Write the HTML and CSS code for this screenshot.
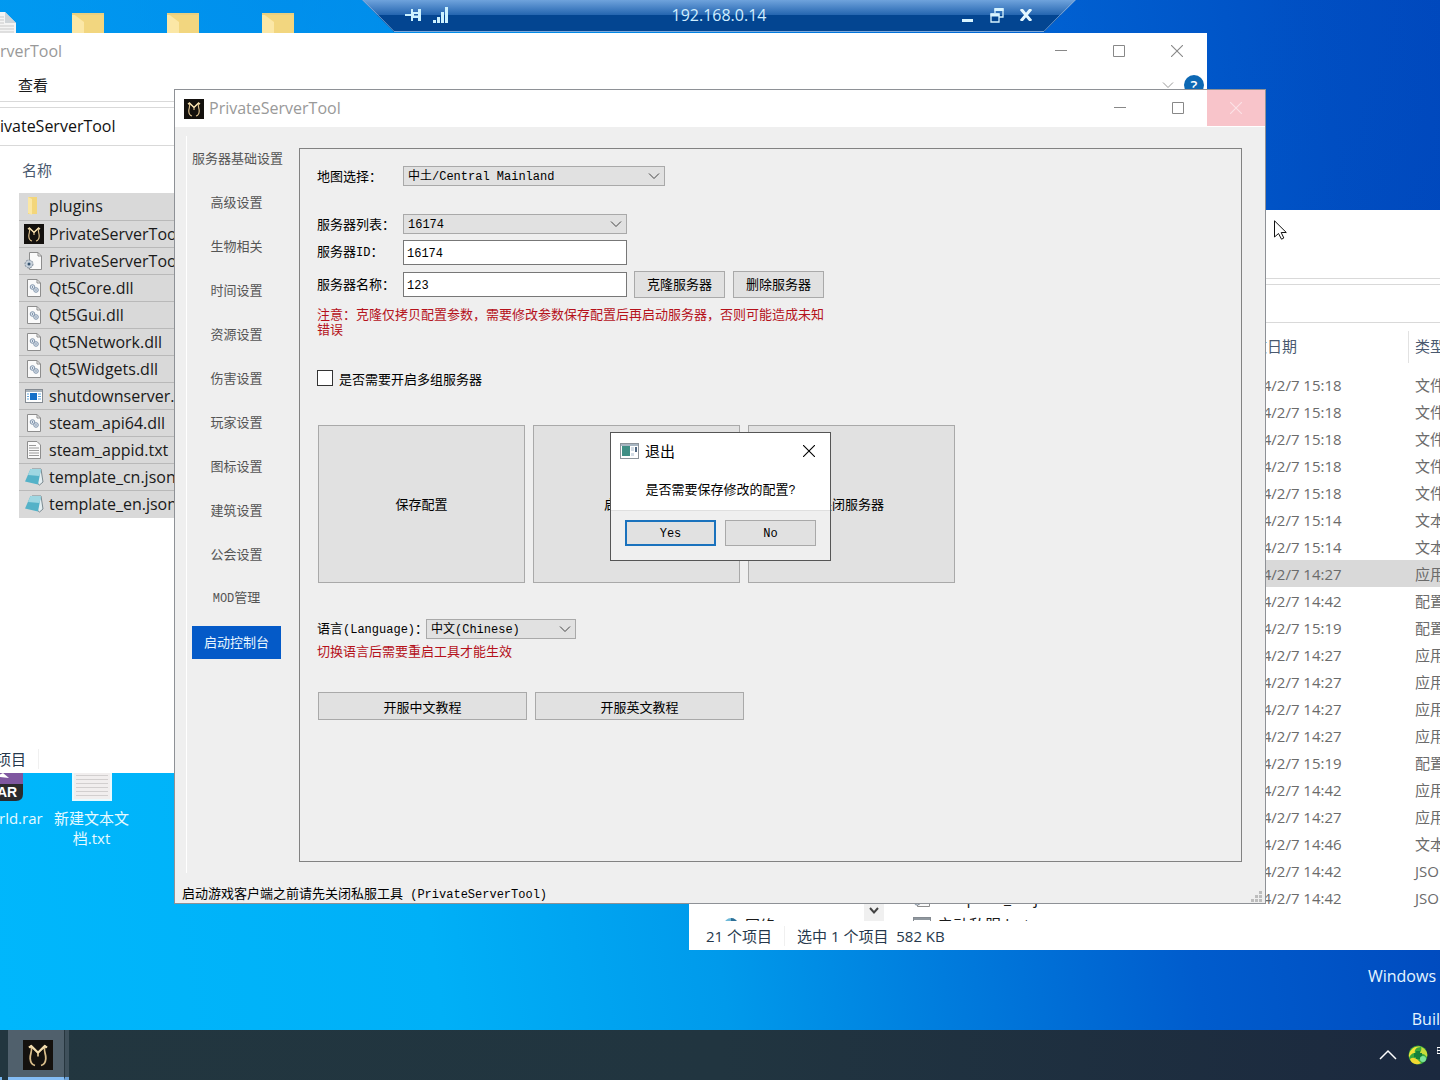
FILE: index.html
```html
<!DOCTYPE html>
<html lang="zh-CN">
<head>
<meta charset="utf-8">
<title>PrivateServerTool</title>
<link rel="stylesheet" href="styles.css">
</head>
<body>
<svg class="sprite" aria-hidden="true">
  <symbol id="app" viewBox="0 0 20 20"><rect width="20" height="20" fill="#14110e"/><path d="M4 5 5.500 4 10 8.500 14.500 4 16 5M5.500 4C6.500 8 4.500 9 4.800 12.500 5 15 6 16.500 8 17M14.500 4C13.500 8 15.500 9 15.200 12.500 15 15 14 16.500 12 17M10 8V11" fill="none" stroke="#d9bd8a" stroke-width="1.200"/><path d="M4 5 5.500 4 10 8.500 14.500 4 16 5" fill="none" stroke="#f1dcae" stroke-width="1.200"/></symbol>
  <symbol id="folder" viewBox="0 0 20 20"><path d="M4 1H13V18H4Z" fill="#f3d67b"/><path d="M4 1 8 3V19L4 17Z" fill="#fbe7a4"/></symbol>
  <symbol id="dll" viewBox="0 0 20 20"><path d="M3.500 1.500H13L16.500 5V18.500H3.500Z" fill="#fafafa" stroke="#8d8d8d"/><path d="M13 1.500V5H16.500" fill="none" stroke="#8d8d8d"/><circle cx="8.500" cy="9" r="2.300" fill="#dfe6ee" stroke="#8296ad"/><circle cx="12" cy="12" r="2.300" fill="#dfe6ee" stroke="#8296ad"/><path d="M8.500 8V10M11 12H13" stroke="#8296ad"/></symbol>
  <symbol id="ini" viewBox="0 0 20 20"><path d="M5.500 1.500H14L17.500 5V18.500H5.500Z" fill="#fafafa" stroke="#8d8d8d"/><path d="M14 1.500V5H17.500" fill="none" stroke="#8d8d8d"/><circle cx="5" cy="13" r="4" fill="#c7d1db" stroke="#7f8c99" stroke-dasharray="2 1"/><circle cx="5" cy="13" r="1.500" fill="#35526e"/></symbol>
  <symbol id="exe" viewBox="0 0 20 20"><rect x="1.500" y="3.500" width="17" height="13" fill="#fff" stroke="#858b92"/><path d="M2 5H18" stroke="#a9b4bd" stroke-width="2"/><rect x="6" y="7" width="7" height="7" fill="#1470c8"/><path d="M3 8H5M3 10.500H5M3 13H5M14 8H17M14 10.500H17M14 13H17" stroke="#62a7dd"/></symbol>
  <symbol id="bat" viewBox="0 0 20 20"><rect x="1.500" y="2.500" width="17" height="16" fill="#fff" stroke="#858b92"/><path d="M2 4H18" stroke="#8f979e" stroke-width="2"/><circle cx="9" cy="10" r="3" fill="none" stroke="#8296ad"/></symbol>
  <symbol id="txt" viewBox="0 0 20 20"><path d="M3.500 1.500H13L16.500 5V18.500H3.500Z" fill="#fafafa" stroke="#8d8d8d"/><path d="M5 5.500H12M5 8H15M5 10.500H15M5 13H15M5 15.500H15" stroke="#9a9a9a"/></symbol>
  <symbol id="note" viewBox="0 0 20 20"><path d="M8 2 17 2 19 15 15.500 18 13 16Z" fill="#e4eef1" stroke="#5f7178" stroke-width=".8"/><path d="M6.500 2H17L14 17.500 1 14.500Z" fill="#54b2c8"/><path d="M6.500 2H17L15.500 9 4 8Z" fill="#9fd7e2"/></symbol>
  <symbol id="chev" viewBox="0 0 12 12"><path d="M1 3.500 6 8.500 11 3.500" fill="none" stroke="currentColor"/></symbol>
  <symbol id="min" viewBox="0 0 12 12"><path d="M0 5.500H12" stroke="currentColor"/></symbol>
  <symbol id="max" viewBox="0 0 12 12"><path d="M.5.500H11.500V11.500H.5Z" fill="none" stroke="currentColor"/></symbol>
  <symbol id="close" viewBox="0 0 12 12"><path d="M0 0 12 12M12 0 0 12" stroke="currentColor" stroke-width="1.100"/></symbol>
  <symbol id="bigfolder" viewBox="0 0 32 32"><path d="M0 1H32V32H0Z" fill="#f2d67f"/><path d="M0 1 12 10V32H0Z" fill="#fbe7a6"/><path d="M0 1H32V3H0Z" fill="#e9cf80"/></symbol>
</svg>

<main class="desktop">
  <div class="shortcuts">
    <svg class="doc" viewBox="0 0 16 22"><path d="M0 0H5L16 11V22H0Z" fill="#f4f4f4"/><path d="M5 0V11H16Z" fill="#cfd4d8"/><path d="M0 5H4M0 8H4M0 11H4M0 14H14M0 17H14M0 20H14" stroke="#c9c9c9"/></svg>
    <svg class="fold"><use href="#bigfolder"/></svg>
    <svg class="fold"><use href="#bigfolder"/></svg>
    <svg class="fold"><use href="#bigfolder"/></svg>
  </div>

  <div class="files">
    <div class="file rar">
      <svg width="24" height="29" viewBox="0 0 24 29"><path d="M0 0H24V11H0Z" fill="#7f57a0"/><path d="M0 2 4 0 10 5 0 4Z" fill="#fff"/><path d="M0 11H24V21Q24 28 17 28H0Z" fill="#2b2b2e"/><text x="-2" y="24" class="rartext">AR</text></svg>
      <span>rld.rar</span>
    </div>
    <div class="file">
      <svg width="40" height="29" viewBox="0 0 40 29"><path d="M0 0H40V28H0Z" fill="#e9fafe"/><path d="M2 0H38V26H2Z" fill="#f1eeee"/><path d="M4 2.500H36M4 6.500H36M4 10.500H36M4 14.500H36M4 18.500H36M4 22.500H36" stroke="#d2cfcf"/></svg>
      <span>新建文本文<br>档.txt</span>
    </div>
  </div>

  <div class="watermark"><span>Windows</span><span>Buil</span></div>

  <section class="explorer right-explorer">
    <div class="strip-top"></div>
    <div class="strip-gap"></div>
    <div class="strip-address"></div>
    <div class="split">
      <nav class="tree">
        <a href="#" class="net"><svg width="16" height="16" viewBox="0 0 16 16"><circle cx="8" cy="8" r="7" fill="#6fb9d8"/><path d="M8 1A7 7 0 0 1 15 8H8Z" fill="#2e6f96"/></svg>网络</a>
        <button class="scroll" aria-label="向下滚动"><svg width="12" height="12" viewBox="0 0 12 12"><path d="M2 3 6 7.500 10 3" fill="none" stroke="#444" stroke-width="2"/></svg></button>
      </nav>
      <table class="details">
        <colgroup><col class="c-name"><col class="c-date"><col class="c-type"></colgroup>
        <thead><tr><th></th><th>修改日期</th><th>类型</th></tr></thead>
        <tbody>
          <tr><td></td><td>2024/2/7 15:18</td><td>文件夹</td></tr>
          <tr><td></td><td>2024/2/7 15:18</td><td>文件夹</td></tr>
          <tr><td></td><td>2024/2/7 15:18</td><td>文件夹</td></tr>
          <tr><td></td><td>2024/2/7 15:18</td><td>文件夹</td></tr>
          <tr><td></td><td>2024/2/7 15:18</td><td>文件夹</td></tr>
          <tr><td></td><td>2024/2/7 15:14</td><td>文本</td></tr>
          <tr><td></td><td>2024/2/7 15:14</td><td>文本</td></tr>
          <tr class="picked"><td></td><td>2024/2/7 14:27</td><td>应用</td></tr>
          <tr><td></td><td>2024/2/7 14:42</td><td>配置</td></tr>
          <tr><td></td><td>2024/2/7 15:19</td><td>配置</td></tr>
          <tr><td></td><td>2024/2/7 14:27</td><td>应用</td></tr>
          <tr><td></td><td>2024/2/7 14:27</td><td>应用</td></tr>
          <tr><td></td><td>2024/2/7 14:27</td><td>应用</td></tr>
          <tr><td></td><td>2024/2/7 14:27</td><td>应用</td></tr>
          <tr><td></td><td>2024/2/7 15:19</td><td>配置</td></tr>
          <tr><td></td><td>2024/2/7 14:42</td><td>应用</td></tr>
          <tr><td></td><td>2024/2/7 14:27</td><td>应用</td></tr>
          <tr><td></td><td>2024/2/7 14:46</td><td>文本</td></tr>
          <tr><td></td><td>2024/2/7 14:42</td><td>JSON</td></tr>
          <tr><td><span class="name"><svg><use href="#ini"/></svg>template_en.json</span></td><td>2024/2/7 14:42</td><td>JSON</td></tr>
          <tr><td><span class="name"><svg><use href="#bat"/></svg>启动私服.bat</span></td><td>2024/2/7 15:18</td><td>Win</td></tr>
        </tbody>
      </table>
    </div>
    <footer class="status"><span>21 个项目</span><i></i><span>选中 1 个项目&nbsp; 582 KB</span></footer>
  </section>

  <section class="explorer left-explorer">
    <header class="titlebar">
      <span class="title">rverTool</span>
      <button aria-label="最小化"><svg><use href="#min"/></svg></button>
      <button aria-label="最大化"><svg><use href="#max"/></svg></button>
      <button aria-label="关闭"><svg><use href="#close"/></svg></button>
    </header>
    <div class="ribbon"><a href="#">查看</a><svg class="expand"><use href="#chev"/></svg><span class="help">?</span></div>
    <div class="strip-gap"></div>
    <div class="address">ivateServerTool</div>
    <table class="names">
      <thead><tr><th>名称</th></tr></thead>
      <tbody>
        <tr><td><span class="name"><svg><use href="#folder"/></svg>plugins</span></td></tr>
        <tr><td><span class="name"><svg><use href="#app"/></svg>PrivateServerTool</span></td></tr>
        <tr><td><span class="name"><svg><use href="#ini"/></svg>PrivateServerTool</span></td></tr>
        <tr><td><span class="name"><svg><use href="#dll"/></svg>Qt5Core.dll</span></td></tr>
        <tr><td><span class="name"><svg><use href="#dll"/></svg>Qt5Gui.dll</span></td></tr>
        <tr><td><span class="name"><svg><use href="#dll"/></svg>Qt5Network.dll</span></td></tr>
        <tr><td><span class="name"><svg><use href="#dll"/></svg>Qt5Widgets.dll</span></td></tr>
        <tr><td><span class="name"><svg><use href="#exe"/></svg>shutdownserver.exe</span></td></tr>
        <tr><td><span class="name"><svg><use href="#dll"/></svg>steam_api64.dll</span></td></tr>
        <tr><td><span class="name"><svg><use href="#txt"/></svg>steam_appid.txt</span></td></tr>
        <tr><td><span class="name"><svg><use href="#note"/></svg>template_cn.json</span></td></tr>
        <tr><td><span class="name"><svg><use href="#note"/></svg>template_en.json</span></td></tr>
      </tbody>
    </table>
    <footer class="status"><span class="cut">项目</span><i></i></footer>
  </section>

  <section class="tool">
    <header class="titlebar">
      <svg class="logo"><use href="#app"/></svg>
      <h1 class="title">PrivateServerTool</h1>
      <button aria-label="最小化"><svg><use href="#min"/></svg></button>
      <button aria-label="最大化"><svg><use href="#max"/></svg></button>
      <button class="hot" aria-label="关闭"><svg><use href="#close"/></svg></button>
    </header>
    <div class="content">
      <nav class="tabs">
        <button>服务器基础设置</button>
        <button>高级设置</button>
        <button>生物相关</button>
        <button>时间设置</button>
        <button>资源设置</button>
        <button>伤害设置</button>
        <button>玩家设置</button>
        <button>图标设置</button>
        <button>建筑设置</button>
        <button>公会设置</button>
        <button><span class="latin">MOD</span>管理</button>
        <button class="active">启动控制台</button>
      </nav>
      <form class="panel">
        <div class="row map"><label for="map">地图选择：</label><span class="select wide"><select id="map"><option>中土/Central Mainland</option></select><svg><use href="#chev"/></svg></span></div>
        <div class="row list"><label for="list">服务器列表：</label><span class="select"><select id="list"><option>16174</option></select><svg><use href="#chev"/></svg></span></div>
        <div class="row id"><label for="sid">服务器<span class="latin">ID</span>：</label><input type="text" id="sid" value="16174"></div>
        <div class="row"><label for="sname">服务器名称：</label><input type="text" id="sname" value="123"><span class="pair"><button type="button" class="btn">克隆服务器</button><button type="button" class="btn">删除服务器</button></span></div>
        <p class="warn">注意：克隆仅拷贝配置参数，需要修改参数保存配置后再启动服务器，否则可能造成未知错误</p>
        <label class="check"><input type="checkbox">是否需要开启多组服务器</label>
        <div class="actions">
          <button type="button" class="btn">保存配置</button>
          <button type="button" class="btn">启动服务器</button>
          <button type="button" class="btn">关闭服务器</button>
        </div>
        <div class="row language"><label for="lang">语言<span class="latin">(Language)</span>：</label><span class="select small"><select id="lang"><option>中文(Chinese)</option></select><svg><use href="#chev"/></svg></span></div>
        <p class="warn">切换语言后需要重启工具才能生效</p>
        <div class="guides">
          <button type="button" class="btn">开服中文教程</button>
          <button type="button" class="btn">开服英文教程</button>
        </div>
      </form>
    </div>
    <footer class="tip"><span>启动游戏客户端之前请先关闭私服工具<span class="latin"> (PrivateServerTool)</span></span>
      <svg width="12" height="12" viewBox="0 0 12 12"><path d="M8 0h3v3H8zM8 4h3v3H8zM4 4h3v3H4zM8 8h3v3H8zM4 8h3v3H4zM0 8h3v3H0z" fill="#bdbdbd"/></svg>
    </footer>

    <dialog open class="confirm" aria-labelledby="ask">
      <header>
        <svg width="19" height="16" viewBox="0 0 19 16"><rect x=".5" y=".5" width="18" height="15" fill="#fff" stroke="#8d949b"/><path d="M1 2H18" stroke="#a8b6c2" stroke-width="2"/><rect x="2" y="3" width="8" height="10" fill="#3f8f85"/><path d="M11 4H14V8H11ZM11 10H14V13H11Z" fill="#d3dce5"/><path d="M16 4V9" stroke="#4d6580" stroke-width="2"/></svg>
        <h2>退出</h2>
        <button aria-label="关闭"><svg><use href="#close"/></svg></button>
      </header>
      <p id="ask">是否需要保存修改的配置<span class="latin">?</span></p>
      <footer><button class="btn default">Yes</button><button class="btn">No</button></footer>
    </dialog>
  </section>

  <header class="remote">
    <svg class="edge" viewBox="0 0 714 32"><path d="M1 0 32 31.500H682L713 0" fill="none" stroke="#7fa8d8"/></svg>
    <div class="left">
      <button aria-label="固定"><svg width="18" height="14" viewBox="0 0 18 14"><path d="M0 7H7" stroke="#cdf2ff" stroke-width="2"/><path d="M6 1H8V4H13V1H16V13H13V10H8V13H6Z" fill="#cdf2ff"/><path d="M9 6H13V7.500H9Z" fill="#1d5ca8"/></svg></button>
      <svg width="16" height="16" viewBox="0 0 16 16"><path d="M0 13h3v3H0zM4 10h3v6H4zM8 5h3v11H8zM12 0h3v16h-3z" fill="#cdf2ff"/></svg>
    </div>
    <span class="ip">192.168.0.14</span>
    <div class="right">
      <button aria-label="最小化"><svg width="14" height="14" viewBox="0 0 14 14"><path d="M1 11H12V14H1Z" fill="#d8f4ff"/></svg></button>
      <button aria-label="还原"><svg width="14" height="15" viewBox="0 0 14 15"><path d="M5 5V1H13V9H9.500M1 6H9V14H1Z" fill="none" stroke="#d8f4ff" stroke-width="1.300"/><path d="M4.500 1.500H13.500M.5 7H9.500" stroke="#d8f4ff" stroke-width="3"/></svg></button>
      <button aria-label="断开"><svg width="14" height="12" viewBox="0 0 14 12"><path d="M2 0 12 12M12 0 2 12" stroke="#e4f8ff" stroke-width="3"/></svg></button>
    </div>
  </header>

  <svg class="pointer" width="13" height="20" viewBox="0 0 13 20"><path d="M.5.800V17L4.500 13.500 7.500 19.200 9.800 18 7.200 12.500H12.300Z" fill="#fff" stroke="#111"/></svg>
</main>

<footer class="taskbar">
  <span class="stub"></span>
  <button class="task" aria-label="PrivateServerTool"><svg><use href="#app"/></svg></button>
  <span class="stack"></span>
  <div class="tray">
    <svg width="18" height="12" viewBox="0 0 18 12"><path d="M1 10 9 2 17 10" fill="none" stroke="#fff" stroke-width="1.500"/></svg>
    <svg width="20" height="20" viewBox="0 0 20 20"><circle cx="10" cy="10" r="9.500" fill="#3aa83c"/><path d="M1 13C0 5 7 0 13 2 8 2 6 5 7 8 4 8 2 10 1 13Z" fill="#f3e43a"/><path d="M13 2C18 4 20 8 19 12 17 9 14 8 11 9 13 7 14 4 13 2Z" fill="#c8dc3a"/><path d="M2 14C6 11 9 14 13 18 8 21 3 18 2 14Z" fill="#f0d831"/><path d="M8 6H12V8H14V12H12V14H8V12H6V8H8Z" fill="#16803a"/><circle cx="15" cy="14" r="3" fill="#7de39a"/></svg>
    <svg width="3" height="20" viewBox="0 0 3 20"><path d="M3 2.500H0V8.500H3M0 5.500H3" fill="none" stroke="#fff"/></svg>
  </div>
</footer>
</body>
</html>
```
FILE: styles.css
```css
* { box-sizing: border-box; }

body {
  margin: 0;
  min-height: 100vh;
  display: flex;
  flex-direction: column;
  overflow: hidden;
  font: 15px/20px "Open Sans", "Noto Sans CJK SC", sans-serif;
  color: #1a1a1a;
}

button, input, select { font: inherit; color: inherit; margin: 0; }
button { border: 0; padding: 0; background: none; }
h1, h2, p { margin: 0; font: inherit; }
a { color: inherit; text-decoration: none; }
svg { display: block; flex: none; }
table { border-collapse: collapse; }
th { font-weight: 400; text-align: left; }
.sprite { position: absolute; width: 0; height: 0; }
.latin { font-family: "Liberation Mono", monospace; font-size: 12px; white-space: pre; }

/* desktop */
.desktop {
  position: relative;
  flex: 1;
  overflow: hidden;
  background:
    radial-gradient(ellipse 90% 75% at 20% 0, rgba(0, 110, 225, .5), rgba(0, 100, 215, 0)),
    linear-gradient(82deg, #00b7fc 0%, #00b0f7 28%, #009aeb 46%, #007cdd 60%, #005ccd 76%, #004bbf 92%, #0046bb 100%);
}

.shortcuts { position: absolute; top: 12px; left: 0; display: flex; gap: 63px; }
.doc { width: 16px; height: 22px; margin-right: -7px; }
.fold { width: 32px; height: 32px; }

.files { position: absolute; top: 773px; left: 0; display: flex; gap: 13px; color: #e6faff; }
.file { display: flex; flex-direction: column; align-items: center; gap: 6px; text-align: center; white-space: nowrap; }
.rar { align-items: flex-start; width: 42px; margin-left: -1px; }
.rartext { font: 700 14px "Liberation Sans", sans-serif; fill: #fff; }

.watermark {
  position: absolute; right: 0; bottom: 1px; width: 71px;
  display: flex; flex-direction: column; align-items: flex-end; gap: 23px;
  font-size: 16px; color: #e6f6ff; white-space: nowrap;
}
.watermark span:first-child { margin-right: 4px; }

/* window chrome */
.titlebar { display: flex; align-items: center; height: 37px; background: #fff; color: #999; }
.titlebar .title { flex: 1; font-size: 16px; }
.titlebar button { width: 58px; height: 36px; display: grid; place-items: center; align-self: flex-start; }
.titlebar button svg { width: 12px; height: 12px; color: #888; }
.titlebar .hot { background: #f8c4ca; }
.titlebar .hot svg { color: #fbe3e6; }

.explorer { position: absolute; display: flex; flex-direction: column; background: #fff; }
.strip-gap { flex: none; height: 6px; border-bottom: 1px solid #d9d9d9; }
.status { display: flex; align-items: center; flex: none; height: 29px; color: #26384c; white-space: nowrap; }
.status i { width: 1px; height: 20px; background: #f0f0f0; margin: 0 12px; }
.name { display: flex; align-items: center; gap: 5px; white-space: nowrap; color: #1a1a1a; font-size: 16px; }
.name svg { width: 20px; height: 20px; }

/* left explorer */
.left-explorer { left: 0; right: 233px; top: 33px; min-height: 740px; }
.left-explorer .titlebar { height: 36px; padding-right: 1px; }
.ribbon { display: flex; align-items: center; height: 33px; padding: 0 3px 0 18px; border-bottom: 1px solid #d9d9d9; gap: 10px; }
.ribbon a { flex: 1; }
.expand { width: 12px; height: 12px; color: #999; }
.help { width: 20px; height: 20px; border-radius: 10px; background: #0d68b4; color: #fff; font-weight: 600; text-align: center; }
.address { height: 38px; line-height: 37px; border-bottom: 1px solid #d9d9d9; color: #111; font-size: 16px; }
.names { margin-left: 19px; flex: none; }
.names th { height: 47px; padding: 0 3px; color: #4a596f; }
.names td { height: 27px; padding: 0 5px; background: #d9d9d9; border-bottom: 1px solid #b9b9b9; }
.names tr:last-child td { border-bottom-color: #d9d9d9; }
.left-explorer .status { margin-top: auto; }
.cut { display: flex; justify-content: flex-end; width: 26px; overflow: hidden; }

/* right explorer */
.right-explorer { left: 689px; right: 0; top: 210px; min-height: 740px; overflow: hidden; }
.strip-top { flex: none; height: 69px; border-bottom: 1px solid #d9d9d9; }
.strip-address { flex: none; height: 38px; border-bottom: 1px solid #d9d9d9; }
.split { display: flex; flex: none; height: 598px; overflow: hidden; }
.tree { width: 195px; flex: none; display: flex; justify-content: space-between; align-items: flex-end; }
.net { display: flex; align-items: center; gap: 6px; padding-left: 34px; height: 20px; margin-bottom: -14px; }
.scroll { width: 20px; height: 20px; display: grid; place-items: center; background: #f0f0f0; }
.details { table-layout: fixed; width: 556px; flex: none; color: #6b6b6b; white-space: nowrap; }
.c-name { width: 353px; }
.c-date { width: 171px; }
.c-type { width: 32px; }
.details th { height: 48px; padding: 0 0 2px; color: #4a596f; overflow: hidden; }
.details th:last-child { background: linear-gradient(#e2e2e2, #e2e2e2) left center / 1px 32px no-repeat; }
.details td { height: 27px; padding: 0; overflow: hidden; }
.details td:first-child { padding-left: 28px; }
.details th:last-child, .details td:last-child { padding-left: 7px; }
.details .picked td { background: #d9d9d9; }
.right-explorer .status { padding-left: 17px; }

/* server tool window */
.tool {
  position: absolute; left: 174px; right: 174px; top: 89px; min-height: 815px;
  display: flex; flex-direction: column;
  background: #efefef; border: 1px solid #8e9196;
  font: 13px/15px "Noto Sans CJK SC", sans-serif; color: #000;
}
.tool .titlebar { font-family: "Open Sans", sans-serif; padding-left: 9px; }
.logo { width: 20px; height: 20px; margin-right: 5px; }
.content { flex: 1; display: flex; gap: 18px; padding: 9px 23px 0 11px; }
.tabs { width: 95px; flex: none; display: flex; flex-direction: column; gap: 11px; padding: 6px 0 0 5px; border-left: 1px solid #fff; }
.tabs button { height: 33px; padding-bottom: 2px; color: #555; white-space: nowrap; }
.tabs .active { background: #045ac8; color: #e9f7ff; }
.panel { flex: 1; margin: 12px 0 11px; padding: 17px; border: 1px solid #828282; display: flex; flex-direction: column; align-items: flex-start; }

.row { display: flex; align-items: center; gap: 8px; height: 27px; }
.row label { width: 78px; padding-bottom: 2px; white-space: nowrap; }
.row.map { height: 20px; margin-bottom: 28px; }
.row.list { height: 20px; }
.row.id { height: 25px; margin: 6px 0; }
.pair { display: flex; gap: 8px; margin-left: -1px; }
.select { position: relative; width: 224px; height: 20px; }
.select.wide { width: 262px; }
.select.small { width: 150px; }
.select select {
  appearance: none; width: 100%; height: 20px; padding: 2px 4px 0; display: block;
  border: 1px solid #a9a9a9; border-radius: 0; background: #e1e1e1;
  font: 12px/16px "Liberation Mono", "Noto Sans CJK SC", monospace;
}
.select svg { position: absolute; right: 5px; top: 4px; width: 12px; height: 12px; color: #444; pointer-events: none; }
.row input { width: 224px; height: 25px; padding: 2px 3px 0; border: 1px solid #777; background: #fff; font: 12px/20px "Liberation Mono", monospace; }
.btn { height: 27px; width: 91px; background: #e1e1e1; border: 1px solid #a9a9a9; padding-bottom: 2px; }
.warn { color: #b5121b; width: 508px; }
.row + .warn { margin-top: 8px; }
.check { display: flex; align-items: center; gap: 6px; height: 16px; margin: 34px 0 39px; }
.check input { appearance: none; width: 16px; height: 16px; margin: 0; border: 1px solid #333; background: #fff; }
.actions { display: flex; gap: 8px; margin-left: 1px; }
.actions .btn { width: 207px; height: 158px; }
.row.language { height: 20px; margin-top: 36px; gap: 5px; }
.row.language label { width: 104px; padding: 0; }
.row.language + .warn { margin-top: 4px; }
.guides { display: flex; gap: 8px; margin: 34px 0 0 1px; }
.guides .btn { width: 209px; height: 28px; padding: 0; }
.tip { display: flex; justify-content: space-between; align-items: flex-end; height: 30px; padding: 0 2px 0 7px; white-space: nowrap; }

/* confirmation dialog */
.confirm {
  position: absolute; left: 435px; top: 342px; right: auto; margin: 0; padding: 0;
  width: 221px; border: 1px solid #555; background: #fff; color: #000;
}
.confirm header { display: flex; align-items: center; gap: 6px; height: 36px; padding-left: 9px; }
.confirm h2 { flex: 1; font-size: 15px; line-height: 20px; }
.confirm header button { width: 42px; height: 36px; display: grid; place-items: center; }
.confirm header button svg { width: 12px; height: 12px; }
.confirm p { height: 41px; padding-top: 12px; text-align: center; }
.confirm footer { display: flex; justify-content: center; gap: 9px; padding: 9px 0 14px; background: #efefef; border-top: 1px solid #dfdfdf; }
.confirm .btn { font: 12px/15px "Liberation Mono", monospace; height: 26px; padding: 2px 0 0; }
.confirm .default { border: 2px solid #1a72bd; }

/* remote session bar */
.remote {
  position: absolute; top: 0; left: calc(50% - 358px); width: 714px; height: 32px;
  display: grid; grid-template-columns: 1fr auto 1fr; align-items: center;
  padding: 0 43px 2px;
  clip-path: polygon(0 0, 100% 0, calc(100% - 32px) 100%, 32px 100%);
  background: linear-gradient(180deg, #6fa3dc 0, #2465b0 15px, #034591 15px, #034591 100%);
  color: #cfeeff;
  font-size: 16px;
}
.edge { position: absolute; left: 0; top: 0; width: 714px; height: 32px; }
.left, .right { display: flex; align-items: center; gap: 10px; }
.right { justify-content: flex-end; gap: 15px; }

.pointer { position: absolute; left: 1274px; top: 220px; }

/* taskbar */
.taskbar { display: flex; height: 50px; background: linear-gradient(90deg, #22363f, #213540 50%, #1b293f); }
.stub { width: 2px; margin-right: 6px; border-bottom: 3px solid #76b5ee; }
.task { width: 56px; padding: 2px 0 0 3px; display: grid; place-items: center; background: #50606c; border-bottom: 3px solid #84bdf5; }
.task svg { width: 30px; height: 30px; }
.stack { width: 5px; background: #3f505b; border-bottom: 3px solid #6aa1d8; border-left: 1px solid #27363f; }
.tray { margin-left: auto; display: flex; align-items: center; gap: 11px; }
.tray svg:last-child { margin-left: -2px; }
```
